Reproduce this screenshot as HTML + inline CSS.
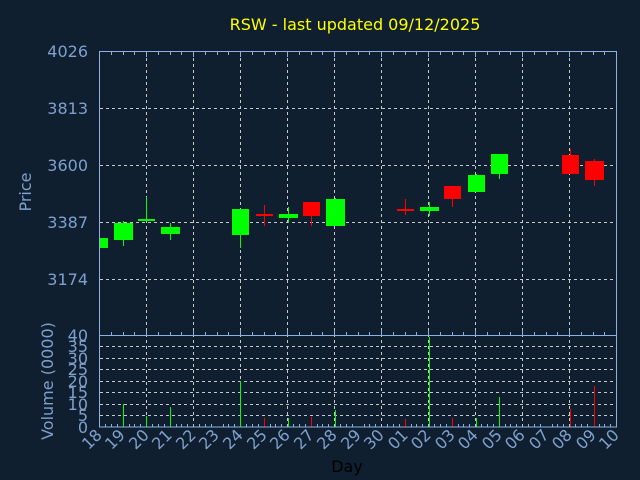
<!DOCTYPE html>
<html><head><style>
html,body{margin:0;padding:0;background:#0f1f30;}
svg{display:block;}
text{font-family:"DejaVu Sans","Liberation Sans",sans-serif;}
</style></head><body>
<svg width="640" height="480" viewBox="0 0 640 480" xmlns="http://www.w3.org/2000/svg">
<rect width="640" height="480" fill="#0f1f30"/>
<text x="355" y="30" fill="#ffff00" font-size="16" text-anchor="middle">RSW - last updated 09/12/2025</text>
<g stroke="#c8c8c8" stroke-width="1" stroke-dasharray="3,3">
<line x1="146.5" y1="52" x2="146.5" y2="427"/><line x1="193.5" y1="52" x2="193.5" y2="427"/>
<line x1="240.5" y1="52" x2="240.5" y2="427"/><line x1="287.5" y1="52" x2="287.5" y2="427"/>
<line x1="334.5" y1="52" x2="334.5" y2="427"/><line x1="381.5" y1="52" x2="381.5" y2="427"/>
<line x1="428.5" y1="52" x2="428.5" y2="427"/><line x1="475.5" y1="52" x2="475.5" y2="427"/>
<line x1="522.5" y1="52" x2="522.5" y2="427"/><line x1="569.5" y1="52" x2="569.5" y2="427"/>
<line x1="100" y1="108.5" x2="617" y2="108.5"/><line x1="100" y1="165.5" x2="617" y2="165.5"/>
<line x1="100" y1="222.5" x2="617" y2="222.5"/><line x1="100" y1="279.5" x2="617" y2="279.5"/>
<line x1="100" y1="346.5" x2="617" y2="346.5"/><line x1="100" y1="358.5" x2="617" y2="358.5"/>
<line x1="100" y1="369.5" x2="617" y2="369.5"/><line x1="100" y1="381.5" x2="617" y2="381.5"/>
<line x1="100" y1="392.5" x2="617" y2="392.5"/><line x1="100" y1="404.5" x2="617" y2="404.5"/>
<line x1="100" y1="415.5" x2="617" y2="415.5"/>
</g>
<g>
<rect x="99" y="238" width="9" height="10" fill="#00ff00"/>
<line x1="123.5" y1="221" x2="123.5" y2="246" stroke="#00ff00"/><rect x="114" y="223" width="19" height="17" fill="#00ff00"/>
<line x1="146.5" y1="197" x2="146.5" y2="221" stroke="#00ff00"/><rect x="138" y="219" width="17" height="2" fill="#00ff00"/>
<line x1="170.5" y1="223" x2="170.5" y2="240" stroke="#00ff00"/><rect x="161" y="227" width="19" height="7" fill="#00ff00"/>
<line x1="240.5" y1="209" x2="240.5" y2="248" stroke="#00ff00"/><rect x="232" y="209" width="17" height="26" fill="#00ff00"/>
<line x1="264.5" y1="205" x2="264.5" y2="226" stroke="#ff0000"/><rect x="256" y="214" width="17" height="2" fill="#ff0000"/>
<line x1="288.5" y1="207" x2="288.5" y2="223" stroke="#00ff00"/><rect x="279" y="214" width="19" height="4" fill="#00ff00"/>
<line x1="311.5" y1="216" x2="311.5" y2="226" stroke="#ff0000"/><rect x="303" y="202" width="17" height="14" fill="#ff0000"/>
<line x1="335.5" y1="198" x2="335.5" y2="226" stroke="#00ff00"/><rect x="326" y="199" width="19" height="27" fill="#00ff00"/>
<line x1="405.5" y1="199" x2="405.5" y2="215" stroke="#ff0000"/><rect x="397" y="209" width="17" height="2" fill="#ff0000"/>
<line x1="429.5" y1="202" x2="429.5" y2="216" stroke="#00ff00"/><rect x="420" y="207" width="19" height="4" fill="#00ff00"/>
<line x1="452.5" y1="199" x2="452.5" y2="207" stroke="#ff0000"/><rect x="444" y="186" width="17" height="13" fill="#ff0000"/>
<line x1="476.5" y1="174" x2="476.5" y2="192" stroke="#00ff00"/><rect x="468" y="175" width="17" height="17" fill="#00ff00"/>
<line x1="499.5" y1="154" x2="499.5" y2="179" stroke="#00ff00"/><rect x="491" y="154" width="17" height="20" fill="#00ff00"/>
<line x1="570.5" y1="149" x2="570.5" y2="174" stroke="#ff0000"/><rect x="562" y="155" width="17" height="19" fill="#ff0000"/>
<line x1="594.5" y1="159" x2="594.5" y2="186" stroke="#ff0000"/><rect x="585" y="161" width="19" height="19" fill="#ff0000"/>
</g>
<g>
<rect x="123" y="404" width="1" height="23" fill="#00ff00"/>
<rect x="146" y="416" width="1" height="11" fill="#00ff00"/>
<rect x="170" y="407" width="1" height="20" fill="#00ff00"/>
<rect x="240" y="381" width="1" height="46" fill="#00ff00"/>
<rect x="264" y="418" width="1" height="9" fill="#ff0000"/>
<rect x="288" y="418" width="1" height="9" fill="#00ff00"/>
<rect x="311" y="417" width="1" height="10" fill="#ff0000"/>
<rect x="335" y="410" width="1" height="17" fill="#00ff00"/>
<rect x="405" y="419" width="1" height="8" fill="#ff0000"/>
<rect x="429" y="337" width="1" height="90" fill="#00ff00"/>
<rect x="452" y="418" width="1" height="9" fill="#ff0000"/>
<rect x="476" y="418" width="1" height="9" fill="#00ff00"/>
<rect x="499" y="397" width="1" height="30" fill="#00ff00"/>
<rect x="570" y="409" width="1" height="18" fill="#ff0000"/>
<rect x="594" y="386" width="1" height="41" fill="#ff0000"/>
</g>
<g stroke="#8cb0e0" fill="none">
<rect x="99.5" y="51.5" width="517" height="375.5"/>
<line x1="99.5" y1="335.5" x2="617" y2="335.5"/>
<path d="M111.5 52v3M123.5 52v3M134.5 52v3M146.5 52v5M158.5 52v3M170.5 52v3M181.5 52v3M193.5 52v5M205.5 52v3M217.5 52v3M228.5 52v3M240.5 52v5M252.5 52v3M264.5 52v3M275.5 52v3M287.5 52v5M299.5 52v3M311.5 52v3M322.5 52v3M334.5 52v5M346.5 52v3M358.5 52v3M369.5 52v3M381.5 52v5M393.5 52v3M405.5 52v3M416.5 52v3M428.5 52v5M440.5 52v3M452.5 52v3M463.5 52v3M475.5 52v5M487.5 52v3M499.5 52v3M510.5 52v3M522.5 52v5M534.5 52v3M546.5 52v3M557.5 52v3M569.5 52v5M581.5 52v3M593.5 52v3M604.5 52v3"/>
<path d="M111.5 335v-3M123.5 335v-3M134.5 335v-3M146.5 335v-5M158.5 335v-3M170.5 335v-3M181.5 335v-3M193.5 335v-5M205.5 335v-3M217.5 335v-3M228.5 335v-3M240.5 335v-5M252.5 335v-3M264.5 335v-3M275.5 335v-3M287.5 335v-5M299.5 335v-3M311.5 335v-3M322.5 335v-3M334.5 335v-5M346.5 335v-3M358.5 335v-3M369.5 335v-3M381.5 335v-5M393.5 335v-3M405.5 335v-3M416.5 335v-3M428.5 335v-5M440.5 335v-3M452.5 335v-3M463.5 335v-3M475.5 335v-5M487.5 335v-3M499.5 335v-3M510.5 335v-3M522.5 335v-5M534.5 335v-3M546.5 335v-3M557.5 335v-3M569.5 335v-5M581.5 335v-3M593.5 335v-3M604.5 335v-3"/>
<path d="M105.5 427v-3M111.5 427v-3M117.5 427v-3M129.5 427v-3M134.5 427v-3M140.5 427v-3M152.5 427v-3M158.5 427v-3M164.5 427v-3M176.5 427v-3M181.5 427v-3M187.5 427v-3M199.5 427v-3M205.5 427v-3M211.5 427v-3M223.5 427v-3M228.5 427v-3M234.5 427v-3M246.5 427v-3M252.5 427v-3M258.5 427v-3M270.5 427v-3M275.5 427v-3M281.5 427v-3M293.5 427v-3M299.5 427v-3M305.5 427v-3M317.5 427v-3M322.5 427v-3M328.5 427v-3M340.5 427v-3M346.5 427v-3M352.5 427v-3M364.5 427v-3M369.5 427v-3M375.5 427v-3M387.5 427v-3M393.5 427v-3M399.5 427v-3M411.5 427v-3M416.5 427v-3M422.5 427v-3M434.5 427v-3M440.5 427v-3M446.5 427v-3M458.5 427v-3M463.5 427v-3M469.5 427v-3M481.5 427v-3M487.5 427v-3M493.5 427v-3M505.5 427v-3M510.5 427v-3M516.5 427v-3M528.5 427v-3M534.5 427v-3M540.5 427v-3M552.5 427v-3M557.5 427v-3M563.5 427v-3M575.5 427v-3M581.5 427v-3M587.5 427v-3M599.5 427v-3M604.5 427v-3M610.5 427v-3"/>
</g>
<g fill="#7fa0cc" font-size="16" text-anchor="end">
<text x="88" y="57">4026</text><text x="88" y="114">3813</text><text x="88" y="171">3600</text>
<text x="88" y="228">3387</text><text x="88" y="285">3174</text>
<text x="88" y="341">40</text><text x="88" y="352">35</text><text x="88" y="364">30</text>
<text x="88" y="375">25</text><text x="88" y="387">20</text><text x="88" y="398">15</text>
<text x="88" y="410">10</text><text x="88" y="421">5</text><text x="88" y="433">0</text>
</g>
<text transform="translate(31,192) rotate(-90)" fill="#7fa0cc" font-size="16" text-anchor="middle">Price</text>
<text transform="translate(53,381) rotate(-90)" fill="#7fa0cc" font-size="16" text-anchor="middle">Volume (0000)</text>
<text x="347" y="472" fill="#000" font-size="16" text-anchor="middle">Day</text>
<g fill="#7fa0cc" font-size="16">
<text transform="translate(103,436) rotate(-45)" text-anchor="end">18</text>
<text transform="translate(126,436) rotate(-45)" text-anchor="end">19</text>
<text transform="translate(150,436) rotate(-45)" text-anchor="end">20</text>
<text transform="translate(173,436) rotate(-45)" text-anchor="end">21</text>
<text transform="translate(197,436) rotate(-45)" text-anchor="end">22</text>
<text transform="translate(220,436) rotate(-45)" text-anchor="end">23</text>
<text transform="translate(244,436) rotate(-45)" text-anchor="end">24</text>
<text transform="translate(268,436) rotate(-45)" text-anchor="end">25</text>
<text transform="translate(291,436) rotate(-45)" text-anchor="end">26</text>
<text transform="translate(315,436) rotate(-45)" text-anchor="end">27</text>
<text transform="translate(338,436) rotate(-45)" text-anchor="end">28</text>
<text transform="translate(362,436) rotate(-45)" text-anchor="end">29</text>
<text transform="translate(385,436) rotate(-45)" text-anchor="end">30</text>
<text transform="translate(409,436) rotate(-45)" text-anchor="end">01</text>
<text transform="translate(432,436) rotate(-45)" text-anchor="end">02</text>
<text transform="translate(456,436) rotate(-45)" text-anchor="end">03</text>
<text transform="translate(479,436) rotate(-45)" text-anchor="end">04</text>
<text transform="translate(503,436) rotate(-45)" text-anchor="end">05</text>
<text transform="translate(526,436) rotate(-45)" text-anchor="end">06</text>
<text transform="translate(550,436) rotate(-45)" text-anchor="end">07</text>
<text transform="translate(573,436) rotate(-45)" text-anchor="end">08</text>
<text transform="translate(597,436) rotate(-45)" text-anchor="end">09</text>
<text transform="translate(620,436) rotate(-45)" text-anchor="end">10</text>
</g>
</svg>
</body></html>
